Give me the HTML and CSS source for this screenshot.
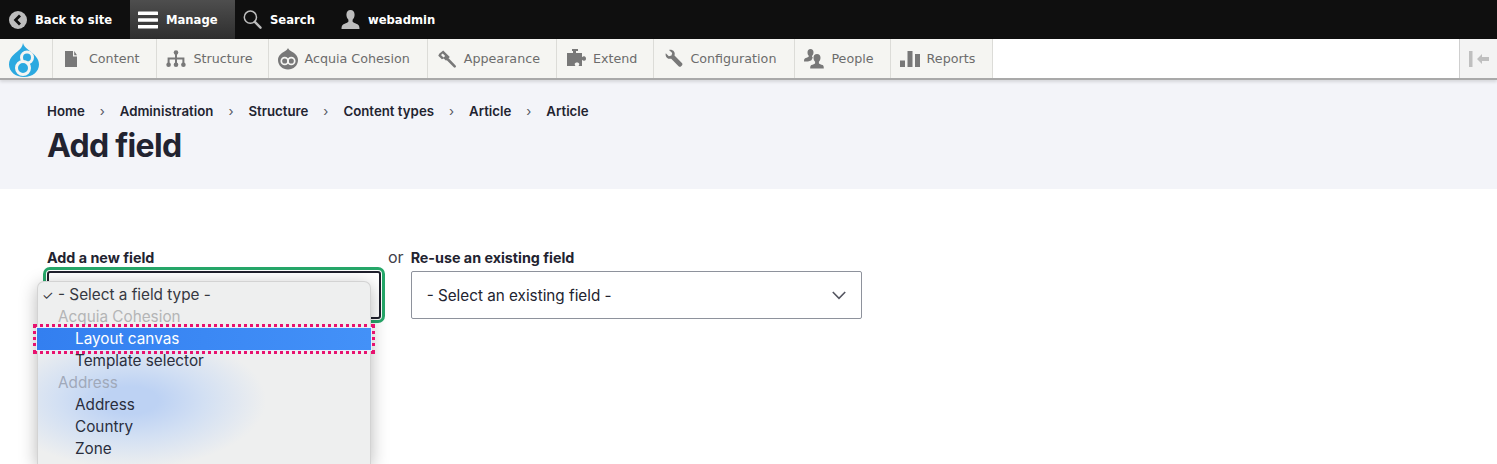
FILE: index.html
```html
<!DOCTYPE html>
<html lang="en">
<head>
<meta charset="utf-8">
<title>Add field</title>
<link rel="stylesheet" href="styles.css">
</head>
<body>
<nav class="topbar">
  <a class="top-item top-back">
    <svg class="top-icon" width="18" height="18" viewBox="0 0 18 18"><circle cx="9" cy="9" r="9" fill="#bdbdbd"/><path d="M11.6 3.6l2 2L10.1 9l3.5 3.4-2 2L6.2 9z" transform="translate(-1.6 0)" fill="#0f0f0f"/></svg>
    <span>Back to site</span>
  </a>
  <a class="top-item top-manage">
    <svg class="top-icon" width="20" height="20" viewBox="0 0 20 20"><path d="M1 1.5h18a1 1 0 0 1 0 3.6H1a1 1 0 0 1 0-3.6zM1 8.2h18a1 1 0 0 1 0 3.6H1a1 1 0 0 1 0-3.6zM1 14.9h18a1 1 0 0 1 0 3.6H1a1 1 0 0 1 0-3.6z" fill="#fff"/></svg>
    <span>Manage</span>
  </a>
  <a class="top-item top-search">
    <svg class="top-icon" width="19" height="19" viewBox="0 0 19 19"><circle cx="7.4" cy="7.2" r="6.1" fill="none" stroke="#bdbdbd" stroke-width="1.5"/><path d="M11.8 11.8l5.7 5.9" stroke="#bdbdbd" stroke-width="2.4" stroke-linecap="round"/></svg>
    <span>Search</span>
  </a>
  <a class="top-item top-user">
    <svg class="top-icon" width="19" height="19" viewBox="0 0 19 19"><path d="M9.5 0c2.5 0 4.1 2 4.1 4.8 0 2.2-1 4-2 5v1.6c0 1 3.2 1.8 5.2 3 1.3.8 1.7 2 1.7 4.6H.5c0-2.600.4-3.800 1.700-4.600 2-1.200 5.200-2 5.200-3V9.800c-1-1-2-2.800-2-5C5.400 2 7 0 9.500 0z" fill="#bdbdbd"/></svg>
    <span>webadmin</span>
  </a>
</nav>

<nav class="tray">
  <a class="tray-logo">
    <svg width="30" height="34" viewBox="0 0 30 34"><path d="M14 0c.6 3 2.600 4.600 6.200 7.600C25.400 11.500 30 15.800 30 21.500 30 28.500 23.500 34 15 34S0 28.500 0 21.500C0 14.500 6 10.500 9.500 7.500 12 5.400 13.500 3.500 14 0z" fill="#2ba9e0"/><circle cx="18" cy="14.500" r="5.500" fill="#2ba9e0" stroke="#f5f5f2" stroke-width="3"/><circle cx="14" cy="25" r="6.500" fill="#2ba9e0" stroke="#f5f5f2" stroke-width="3"/></svg>
  </a>
  <a class="tray-item">
    <svg class="tray-icon" width="20" height="18" viewBox="0 0 20 18"><path d="M3 1h8v5.500h4V17H3zM12.200 1L15 5.300h-2.800z" fill="#787878"/></svg>
    <span>Content</span>
  </a>
  <a class="tray-item tray-item-tight2">
    <svg class="tray-icon" width="20" height="18" viewBox="0 0 20 18"><g fill="#787878"><circle cx="10" cy="2.500" r="2.300"/><circle cx="2.600" cy="14.800" r="2.300"/><circle cx="10" cy="14.800" r="2.300"/><circle cx="17.400" cy="14.800" r="2.300"/><path d="M9 3h2v4.500h7.400V13h-2V9.500H11V13H9V9.500H3.600V13h-2V7.500H9z"/></g></svg>
    <span>Structure</span>
  </a>
  <a class="tray-item">
    <svg class="tray-icon" width="20" height="22" viewBox="0 0 20 22"><path d="M10 0c.5 1.500 2 2.600 3.600 3.600C17 5.500 20 8.300 20 12c0 5.500-4.500 9.500-10 9.500S0 17.500 0 12c0-3.700 3-6.500 6.400-8.400C8 2.600 9.500 1.500 10 0z" fill="#787878"/><circle cx="6.700" cy="13" r="3.400" fill="none" stroke="#f5f5f2" stroke-width="1.700"/><circle cx="13.300" cy="13" r="3.400" fill="none" stroke="#f5f5f2" stroke-width="1.700"/></svg>
    <span>Acquia Cohesion</span>
  </a>
  <a class="tray-item tray-item-tight1">
    <svg class="tray-icon" width="20" height="20" viewBox="0 0 20 20"><path d="M6.200 1.500l6.600 6.600-3.700 3.700-2.400-2.400-1.800.9L1.300 6.700l.9-1.900zM5.700 4.400L4 6.100l2.500 2.500 1.700-1.700z" fill="#787878" fill-rule="evenodd"/><path d="M11 10.500l6.700 6.800" stroke="#787878" stroke-width="2.600" stroke-linecap="round"/></svg>
    <span>Appearance</span>
  </a>
  <a class="tray-item tray-item-tight1">
    <svg class="tray-icon" width="20" height="19" viewBox="0 0 20 19"><path d="M6 0h6v2h-2v2h6v4.200c.800-.800 1.500-1 2.200-1 1.100 0 1.800 1 1.800 2.300s-.7 2.300-1.800 2.300c-.7 0-1.400-.2-2.200-1V17h-3.500c.6-.7.800-1.300.800-1.900 0-1-1-1.700-2.300-1.700s-2.300.7-2.300 1.700c0 .6.200 1.200.800 1.900H1V4h6V2H6z" fill="#787878"/></svg>
    <span>Extend</span>
  </a>
  <a class="tray-item tray-item-wide1">
    <svg class="tray-icon" width="20" height="20" viewBox="0 0 20 20"><path d="M6 1c1.800-.5 3.700 0 4.800 1.300 1 1.200 1.200 2.700.7 4.100l7.400 7.600c.7.700.7 1.800 0 2.500l-.8.800c-.7.700-1.800.7-2.500 0L8.200 9.700c-1.500.4-3.100.1-4.300-1C2.700 7.500 2.300 5.900 2.800 4.300l3 3 2.700-.9.700-2.500z" fill="#787878"/></svg>
    <span>Configuration</span>
  </a>
  <a class="tray-item tray-item-tight1">
    <svg class="tray-icon" width="20" height="20" viewBox="0 0 20 20"><path d="M6.500 0c2 0 3 1.500 3 3.200 0 1.600-.7 2.900-1.400 3.600v1.300l.8.400c-.6.900-.9 1.800-1.300 2.500-.5.600-2 1-4 1.500H0c0-2 .5-3 1.700-3.400 1.200-.5 3.100-1 3.100-1.800V6.800C4 6.100 3.500 4.800 3.500 3.200 3.500 1.500 4.500 0 6.500 0z" fill="#787878"/><path d="M13 5c2.300 0 3.500 1.700 3.500 3.700 0 1.800-.8 3.200-1.600 4v1.500c0 .9 2.500 1.200 3.700 1.900.9.500 1.200 1.400 1.200 3.400H6.200c0-2 .3-2.900 1.200-3.400 1.200-.7 3.700-1 3.700-1.900v-1.500c-.8-.8-1.600-2.200-1.600-4C9.500 6.700 10.700 5 13 5z" fill="#787878"/></svg>
    <span>People</span>
  </a>
  <a class="tray-item">
    <svg class="tray-icon" width="20" height="18" viewBox="0 0 20 18"><path d="M0 10.500h5V17H0zM7.500 1h5v16h-5zM15 4h5v13h-5z" fill="#787878"/></svg>
    <span>Reports</span>
  </a>
  <div class="tray-fill"></div>
  <a class="tray-toggle">
    <svg width="20" height="16" viewBox="0 0 20 16"><path d="M0 0h3.500v16H0zM8 8l5-5v3h7v4h-7v3z" fill="#bfbfbf"/></svg>
  </a>
</nav>

<header class="page-head">
  <ol class="crumbs">
    <li>Home</li>
    <li>Administration</li>
    <li>Structure</li>
    <li>Content types</li>
    <li>Article</li>
    <li>Article</li>
  </ol>
  <h1 class="title">Add field</h1>
</header>

<main class="page-body">
  <div class="field field-new">
    <label class="field-label">Add a new field</label>
    <div class="select select-focus"></div>
    <div class="menu">
      <div class="menu-row menu-group menu-checked"><span class="check">✓</span><span>- Select a field type -</span></div>
      <div class="menu-row menu-group menu-muted">Acquia Cohesion</div>
      <div class="menu-row menu-option menu-active">Layout canvas</div>
      <div class="menu-row menu-option">Template selector</div>
      <div class="menu-row menu-group menu-muted menu-muted-blue">Address</div>
      <div class="menu-row menu-option">Address</div>
      <div class="menu-row menu-option">Country</div>
      <div class="menu-row menu-option">Zone</div>
      <div class="menu-row menu-group menu-muted">General</div>
    </div>
  </div>
  <span class="or">or</span>
  <div class="field field-existing">
    <label class="field-label">Re-use an existing field</label>
    <div class="select">
      <span>- Select an existing field -</span>
      <svg width="14" height="9" viewBox="0 0 14 9"><path d="M.8 1l6.200 6.300L13.200 1" fill="none" stroke="#545560" stroke-width="1.600"/></svg>
    </div>
  </div>
</main>
</body>
</html>
```

FILE: styles.css
```css
* { box-sizing: border-box; }
html, body { margin: 0; height: 464px; overflow: hidden; background: #fff; }
body { font-family: Inter, "Liberation Sans", sans-serif; color: #222330; font-size: 16px; }

.topbar { display: flex; height: 39px; background: #0f0f0f; font-family: "DejaVu Sans", sans-serif; font-weight: 700; font-size: 11.600px; color: #fff; }
.top-item { display: flex; align-items: center; gap: 8px; height: 39px; }
.top-back { width: 130px; padding-left: 9px; }
.top-manage { width: 105px; padding-left: 8px; background: linear-gradient(#4e4e4e, #2e2e2e); }
.top-search { width: 98px; padding-left: 8px; }
.top-user { padding-left: 8px; }

.tray { display: flex; height: 41px; background: #fff; border-bottom: 2px solid #a9a9a9; box-shadow: 0 2px 3px rgba(0,0,0,.12); font-family: "DejaVu Sans", sans-serif; font-size: 12.700px; color: #6c6c6c; position: relative; }
.tray-logo { display: flex; align-items: flex-end; width: 53px; padding: 0 0 0 9px; background: #f5f5f2; border-right: 1px solid #dcdcd8; }
.tray-logo svg { margin-bottom: 1px; }
.tray-item { display: flex; align-items: center; gap: 7px; padding: 0 17px 0 9px; background: #f5f5f2; border-right: 1px solid #dcdcd8; }
.tray-item-tight1 { padding-right: 16px; }
.tray-item-tight2 { padding-right: 15px; }
.tray-item-wide1 { padding-right: 18px; }
.tray-fill { flex: 1; background: #fff; }
.tray-toggle { display: flex; align-items: center; justify-content: center; width: 38px; background: #f3f3f3; border-left: 1px solid #cfcfcf; }

.page-head { height: 109px; background: #f3f4f9; padding: 23px 47px 0; }
.crumbs { display: flex; margin: 0; padding: 0; list-style: none; font-size: 13.250px; font-weight: 600; line-height: 16px; color: #222330; }
.crumbs li + li::before { content: "›"; display: inline-block; width: 35px; text-align: center; font-weight: 400; color: #55565f; }
.title { margin: 7px 0 0; font-size: 32px; line-height: 40px; font-weight: 700; letter-spacing: -0.700px; }

.page-body { display: flex; align-items: flex-start; padding: 60px 47px 0; }
.field { position: relative; }
.field-label { display: block; font-size: 14.300px; font-weight: 700; line-height: 18px; margin-bottom: 4px; }
.select { display: flex; align-items: center; justify-content: space-between; height: 48px; background: #fff; border: 1px solid #8e929c; border-radius: 2px; padding: 0 15px; font-size: 15.260px; }
.field-new .select { width: 334px; }
.field-existing .select { width: 451px; }
.select-focus { border: 2px solid #1f202c; outline: 3px solid #26a769; outline-offset: 1px; border-radius: 3px; }
.or { margin: -2px 7px 0; line-height: 20px; color: #3f404a; }

.menu { position: absolute; left: -10px; top: 32px; width: 334px; height: 183px; padding-top: 2px; border: 1px solid #d3d3d3; border-bottom: 0; border-radius: 7px 7px 0 0; background: radial-gradient(ellipse 135px 68px at 28% 65%, #bdd2f3 20%, #d3e0f3 55%, rgba(238,239,239,0) 100%), #eeefef; box-shadow: 0 4px 18px rgba(0,0,0,.28); color: #2a2e3d; font-size: 15.300px; }
.menu-row { height: 22px; line-height: 22px; white-space: nowrap; }
.menu-group { padding-left: 20px; }
.menu-option { padding-left: 37px; }
.menu-muted { color: #b4b5b6; }
.menu-muted-blue { color: #a0a9ba; }
.menu-checked { display: flex; color: #363841; padding-left: 4px; }
.check { width: 16px; font-size: 13px; }
.menu-active { position: relative; margin: 0 -1px; padding-left: 38px; color: #fff; background: linear-gradient(90deg, #337ff0, #4391f8); box-shadow: 0 0 0 1px #e8eefb; outline: 3px dotted #e8116f; outline-offset: 1px; }
```
